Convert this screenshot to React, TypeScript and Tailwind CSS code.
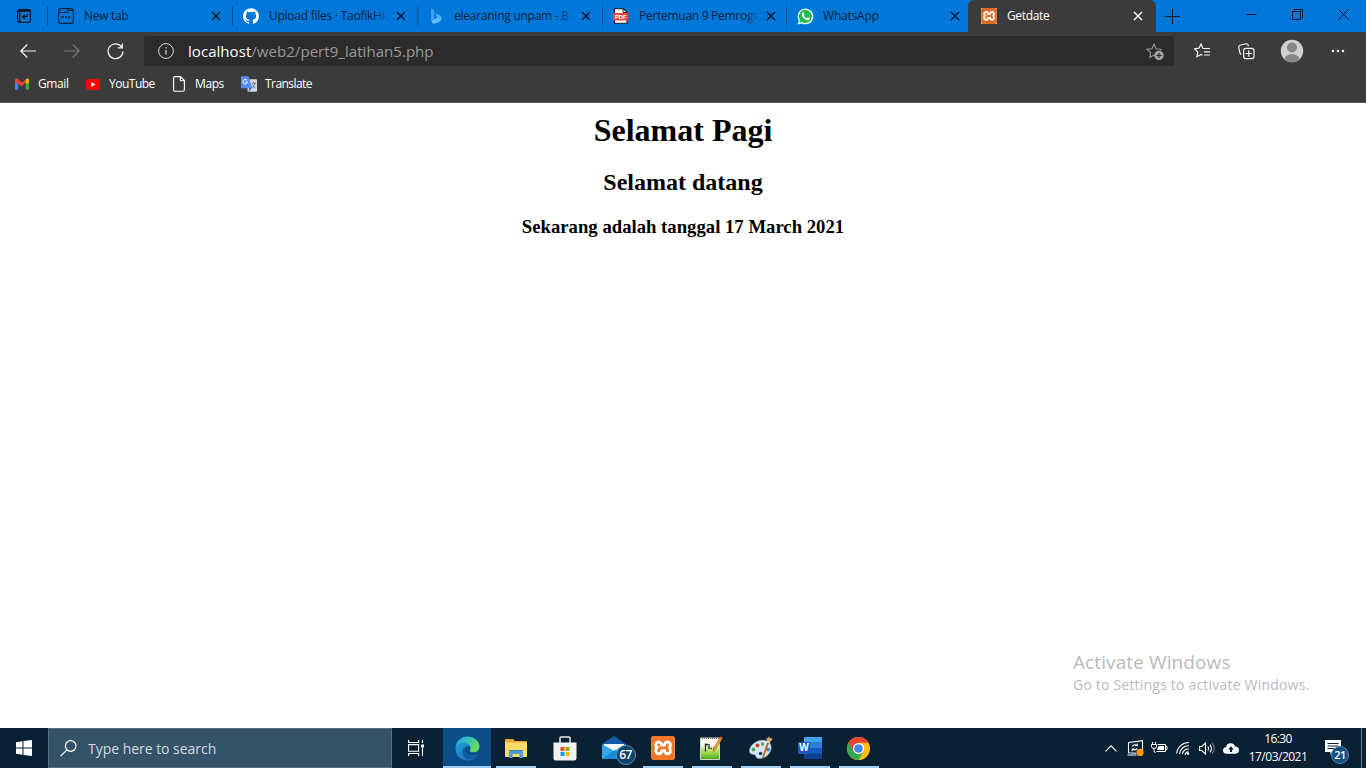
import type { ReactNode } from "react";
import { SiGithub, SiXampp } from "react-icons/si";

const line = { fill: "none", stroke: "currentColor", strokeWidth: 1 } as const;

function CloseGlyph() {
  return (
    <svg width="10" height="10" viewBox="0 0 10 10" {...line} strokeWidth={1.4}>
      <path d="M1 1l8 8M9 1L1 9" />
    </svg>
  );
}

function VerticalTabsIcon() {
  return (
    <svg width="16" height="16" viewBox="0 0 16 16" {...line} strokeWidth={1.3}>
      <rect x="1.6" y="1.6" width="12.8" height="12.8" rx="1.8" />
      <path d="M1.6 2.800h12.800" strokeWidth="2" />
      <path d="M3.800 3v11.400" />
      <path d="M11.500 6v1.300q0 1.400-1.400 1.400H6.800M8.800 6.500L6.600 8.700l2.200 2.200" />
    </svg>
  );
}

function NewTabIcon() {
  return (
    <svg width="16" height="16" viewBox="0 0 16 16" {...line} stroke="#03203f" strokeWidth={1.1}>
      <rect x="0.6" y="0.6" width="14.8" height="14.8" rx="2.4" />
      <path d="M.6 4.500h8.200q1.200 0 1.200-1.200V2M10 2.500h5.400" />
      <path d="M3.600 9.200h2M7 9.200h2M10.400 9.200h2" strokeWidth="2" />
    </svg>
  );
}

function BingIcon() {
  return (
    <svg width="13" height="16" viewBox="0 0 13 16">
      <defs>
        <linearGradient id="bing" x1="0" y1="0" x2="0" y2="1">
          <stop offset="0" stopColor="#3fa9f2" />
          <stop offset="1" stopColor="#4b9cf5" />
        </linearGradient>
      </defs>
      <path d="M1 .6l2.600 1.300q.6.400.6 1.100v8.300L1.200 13z" fill="url(#bing)" />
      <path d="M5.600 5.200l4 2q2.300 1.300 2 3.600-.2 1.600-2 2.600L5 15.400q-2.400.8-3.600-1.600L8 10.300l-1.300-.9z" fill="#48aef5" />
      <path d="M1.200 13l6.300-3.200 4.100.6q-.2 2-2.200 3.200L5 15.400q-2.600.6-3.800-2.400z" fill="#67bdfb" />
    </svg>
  );
}

function PdfIcon() {
  return (
    <svg width="16" height="16" viewBox="0 0 16 16">
      <path d="M1.500 .7h9l3.500 3.500v11.100h-12.500z" fill="#fff" stroke="#1b1b1b" strokeWidth="1.1" />
      <path d="M10 .7v3.800h4z" fill="#fff" stroke="#1b1b1b" strokeWidth=".9" />
      <rect x="0" y="5" width="15.4" height="7.4" rx=".8" fill="#f0403f" />
      <text x="7.7" y="10.8" textAnchor="middle" fontSize="5.8" fontWeight="700" fontFamily="Liberation Sans, sans-serif" fill="#fff">PDF</text>
    </svg>
  );
}

function WhatsAppIcon() {
  return (
    <svg width="17" height="17" viewBox="0 0 17 17">
      <path d="M.5 16.5l1.200-4A7.900 7.900 0 1 1 4.700 15.400z" fill="#eefcf1" />
      <path d="M2.200 14.800l.8-2.700A6.500 6.500 0 1 1 5 14z" fill="#22bd4c" />
      <path d="M5.600 4.400q.6-.5 1 .1l.8 1.700q.1.400-.7 1.200 1 2 3 2.800.9-1.100 1.200-1l1.800.9q.4.400-.3 1.500-1.200 1.100-3.300.2Q6 10.500 4.900 8q-.7-2.300.7-3.600z" fill="#fff" />
    </svg>
  );
}

function XamppIcon({ small }: { small?: boolean }) {
  return small ? (
    <span className="block h-4 w-4 bg-[#fff1e0]"><SiXampp size={16} color="#dd6d2b" /></span>
  ) : (
    <span className="block h-6 w-6 rounded-sm bg-white"><SiXampp size={24} color="#f17627" /></span>
  );
}

type TabProps = { icon: ReactNode; title: string; fade?: string; width: string; track: string };

function Tab({ icon, title, fade, width, track }: TabProps) {
  return (
    <div className={`relative flex h-8 shrink-0 items-center pl-[10px] text-[#03203f] ${width}`}>
      <span className="flex w-[26px] items-center">{icon}</span>
      <span className={`w-[118px] whitespace-nowrap text-xs ${track}`}>
        {title}
        {fade && <span className="bg-gradient-to-r from-[#03203f] to-[#0074d2] bg-clip-text text-transparent">{fade}</span>}
      </span>
      <span className="ml-[9px] text-[#04162c]"><CloseGlyph /></span>
      <span className="absolute right-0 top-[6px] h-5 w-px bg-[#064f94]" />
    </div>
  );
}

function TabStrip() {
  return (
    <div className="flex h-8 bg-[#0078d9]">
      <div className="relative flex w-12 items-center justify-center text-[#04162c]">
        <VerticalTabsIcon />
        <span className="absolute right-0 top-[6px] h-5 w-px bg-[#064f94]" />
      </div>
      <Tab width="w-[185px]" track="tracking-[-0.3px]" title="New tab" icon={<NewTabIcon />} />
      <Tab width="w-[185px]" track="tracking-[-0.25px]" title="Upload files · Taofik" fade="Hic" icon={<SiGithub size={16} color="#fff" />} />
      <Tab width="w-[185px]" track="tracking-[-0.25px]" title="elearaning unpam - " fade="Bi" icon={<span className="pl-[2px]"><BingIcon /></span>} />
      <Tab width="w-[184px]" track="tracking-[-0.28px]" title="Pertemuan 9 Pemro" fade="gr" icon={<PdfIcon />} />
      <div className="flex h-8 w-[181px] items-center pl-[10px] text-[#03203f]">
        <span className="flex w-[26px]"><WhatsAppIcon /></span>
        <span className="w-[118px] text-xs tracking-[-0.2px]">WhatsApp</span>
        <span className="ml-[9px] text-[#04162c]"><CloseGlyph /></span>
      </div>
      <div className="flex w-[188px] items-center rounded-t-md bg-[#3b3b3b] pl-[13px] text-white">
        <span className="w-[26px]"><XamppIcon small /></span>
        <span className="w-[126px] text-xs tracking-[-0.35px]">Getdate</span>
        <CloseGlyph />
      </div>
      <div className="flex flex-1 items-center pl-[9px] text-[#04162c]">
        <svg width="15" height="15" viewBox="0 0 15 15" {...line}><path d="M0 7.500h15M7.500 0v15" /></svg>
      </div>
      <div className="flex w-[138px] text-[#04162c]">
        <span className="flex w-[46px] justify-center pt-[9px]">
          <svg width="11" height="11" viewBox="0 0 11 11" {...line}><path d="M0.500 5.500h10" /></svg>
        </span>
        <span className="flex w-[46px] justify-center pt-[9px]">
          <svg width="11" height="11" viewBox="0 0 11 11" {...line}><path d="M.5 2.500h8v8h-8zM2.500 2.500v-2h8v8h-2" /></svg>
        </span>
        <span className="flex w-[46px] justify-center pt-[9px]">
          <svg width="11" height="11" viewBox="0 0 11 11" {...line}><path d="M.5.5l10 10M10.500.5l-10 10" /></svg>
        </span>
      </div>
    </div>
  );
}

function Toolbar() {
  return (
    <div className="flex h-[38px] items-center text-[#f2f2f2]">
      <div className="flex w-[144px] items-center pl-5">
        <svg width="16" height="14" viewBox="0 0 16 14" {...line} strokeWidth={1.2}><path d="M16 7H.8M7.300.5L.8 7l6.500 6.500" /></svg>
        <svg className="ml-7 text-[#777]" width="16" height="14" viewBox="0 0 16 14" {...line} strokeWidth={1.2}><path d="M0 7h15.200M8.700.5L15.200 7l-6.500 6.500" /></svg>
        <svg className="ml-[27px]" width="17" height="17" viewBox="0 0 17 17" {...line} strokeWidth={1.3}><path d="M14.900 4.500A7.400 7.400 0 1 0 15.900 8.500M15.300.6v4.300h-4.500" /></svg>
      </div>
      <div className="flex h-[30px] w-[1030px] items-center rounded-[3px] bg-[#2b2b2b] pl-[14px] pr-[10px]">
        <svg width="16" height="16" viewBox="0 0 16 16" fill="none" stroke="#d8d8d8"><circle cx="8" cy="8" r="7.400" /><path d="M8 7v4.500M8 4.200v1.400" strokeWidth="1.300" /></svg>
        <span className="ml-[14px] flex-1 whitespace-nowrap text-[15px] leading-5 tracking-[0.05px] text-[#9a9a9a]"><span className="text-white">localhost</span>/web2/pert9_latihan5.php</span>
        <svg width="18" height="17" viewBox="0 0 18 17" fill="none" stroke="#999" strokeWidth="1.100">
          <path d="M9 13l-1-1-4.200 2.400.9-4.800L1 6.300l4.900-.6L8 1.200l2.100 4.500 4.900.6-1 1" />
          <circle cx="13" cy="12.400" r="4.700" fill="#a6a6a6" stroke="none" />
          <path d="M13 9.800v5.200M10.400 12.400h5.200" stroke="#2b2b2b" strokeWidth="1.200" />
        </svg>
      </div>
      <div className="flex flex-1 items-center pl-5">
        <svg width="16" height="16" viewBox="0 0 16 16" {...line} strokeWidth={1.2}>
          <path d="M9.300 5.500L8.700 5 7 1 5 5.200l-4.500.6 3.300 3.100-.9 4.800L7 11.500l1.500.8M9 5.500h7M10 8.800h6M10 12h6" />
        </svg>
        <svg className="ml-7" width="17" height="17" viewBox="0 0 17 17" {...line} strokeWidth={1.2}>
          <path d="M3.200 11.500Q2.200 10.800 1.800 9.500L.8 4.500Q.6 2.500 2.500 2L7.800.8Q9.800.5 10.300 2.500l.2.600" />
          <rect x="5.600" y="5.400" width="10.400" height="10.200" rx="2.300" />
          <path d="M10.800 7.300v6.400M7.600 10.500h6.400" />
        </svg>
        <svg className="ml-[25px]" width="24" height="24" viewBox="0 0 24 24">
          <clipPath id="avatar"><circle cx="12" cy="12" r="11.200" /></clipPath>
          <g clipPath="url(#avatar)"><path d="M0 0h24v24H0z" fill="#d2d0ce" /><circle cx="12" cy="8.500" r="5" fill="#8a8886" /><ellipse cx="12" cy="21.500" rx="8" ry="6.500" fill="#8a8886" /></g>
        </svg>
        <svg className="ml-[27px]" width="14" height="4" viewBox="0 0 14 4" fill="currentColor"><circle cx="2" cy="2" r="1.250" /><circle cx="7" cy="2" r="1.250" /><circle cx="12" cy="2" r="1.250" /></svg>
      </div>
    </div>
  );
}

function Bookmarks() {
  return (
    <div className="flex h-[33px] items-center border-b border-[#5c5c5c] pb-[4px] pl-[15px] text-xs text-white">
      <div className="flex w-[71px] items-center">
        <svg width="14" height="12" viewBox="0 0 14 12">
          <path d="M0 3v8q0 .8.9.800H3.200V4z" fill="#4285f4" /><path d="M14 3v8q0 .8-.9.800H10.800V4z" fill="#34a853" />
          <path d="M0 2.200Q.3 0 2.200.6l4.800 3.800L11.800.6Q12.700.2 13.300 1L7 8.600 0 4z" fill="#ea4335" /><path d="M10.800 1.400Q13.700-.8 14 2.200V4l-3.200 2.500z" fill="#fbbc04" />
        </svg>
        <span className="ml-[9px] tracking-[-0.4px]">Gmail</span>
      </div>
      <div className="flex w-[87px] items-center">
        <svg width="14" height="11" viewBox="0 0 14 11"><rect width="14" height="11" rx="2.500" fill="#f00" /><path d="M5.300 3v5l4.200-2.500z" fill="#fff" /></svg>
        <span className="ml-[9px] tracking-[-0.5px]">YouTube</span>
      </div>
      <div className="flex w-[68px] items-center">
        <svg width="12" height="16" viewBox="0 0 12 16" {...line} strokeWidth={1.1}><path d="M2.200.6h5.200l4 4v9.200q0 1.500-1.600 1.500H2.200Q.6 15.300.6 13.800V2.200Q.6.600 2.200.6zM7.300.6v3.500q0 .7.700.7h3.400" /></svg>
        <span className="ml-[10px] tracking-[-0.4px]">Maps</span>
      </div>
      <div className="flex items-center">
        <svg width="16" height="16" viewBox="0 0 16 16">
          <rect x="6.500" y="3.200" width="9.500" height="12.500" rx="1" fill="#d6d8db" /><path d="M8.500 11.600l-1 4.100 3.200-3.500z" fill="#3060c0" />
          <path d="M1 .2h6.500l3.800 12H1q-1 0-1-1v-10q0-1 1-1z" fill="#5290f5" />
          <path d="M11 7.200h4M12.300 5.800v1.400M14 7.200q-.7 3.200-3 5M11.500 8.600q1 2.300 3 3.500" fill="none" stroke="#667b85" />
          <path d="M6 4.200A2.300 2.300 0 1 0 6.500 6H4.400" fill="none" stroke="#fff" />
        </svg>
        <span className="ml-2 tracking-[-0.55px]">Translate</span>
      </div>
    </div>
  );
}

function EdgeIcon() {
  return (
    <svg width="25" height="25" viewBox="0 0 25 25">
      <defs>
        <linearGradient id="edgeTop" x1="0" y1="0" x2="1" y2=".3"><stop offset="0" stopColor="#239fdd" /><stop offset=".55" stopColor="#35c3c0" /><stop offset="1" stopColor="#65df55" /></linearGradient>
        <linearGradient id="edgeLow" x1="0" y1="0" x2="1" y2="1"><stop offset="0" stopColor="#259bdc" /><stop offset="1" stopColor="#1368b8" /></linearGradient>
      </defs>
      <path d="M.5 12C1 4.500 6.500.5 12.500.5S24.500 5 24.500 10.500c0 4-3 5.800-6.200 5.800-2.600 0-4.300-1-3.300-2.400 1.500-2.200.1-5.300-3.500-5.400C6 8 2 9.500.5 12z" fill="url(#edgeTop)" />
      <path d="M.5 12.500C1.300 8.500 5 6.500 9 6.700c3.500.1 6 1.800 6.400 4.500-1.500-1.500-4.200-1.700-5.600.5-1.800 3-.5 8 4.700 9.100 3.500.8 6.300-.5 8.300-2-2.300 4-6 5.800-10.400 5.800C5.500 24.500.2 19 .5 12.500z" fill="url(#edgeLow)" />
      <path d="M9.300 11.300c-3 3-2.500 9.200 2.500 12 5 .6 9-1.400 11-4.500.3-.7-.2-1-.8-.7-6.500 2.900-11.900.2-12.700-6.800z" fill="#155ba4" />
    </svg>
  );
}

function ExplorerIcon() {
  return (
    <svg width="22" height="19" viewBox="0 0 22 19">
      <path d="M0 1q0-1 1-1h7l2 2h11q1 0 1 1v3H0z" fill="#e9a83b" /><rect y="3.500" width="22" height="14.500" rx=".7" fill="#ffda6a" />
      <path d="M4 19v-6q0-2 2-2h10q2 0 2 2v6h-3.500v-4h-7v4z" fill="#4c9cd2" /><path d="M4 11.500h14" stroke="#3a83b8" />
    </svg>
  );
}

function StoreIcon() {
  return (
    <svg width="24" height="25" viewBox="0 0 24 25">
      <path d="M7 7V2q0-1 1-1h8q1 0 1 1v5" fill="none" stroke="#e9edf0" strokeWidth="1.500" /><path d="M.5 6.500h23v15.800q0 2.200-2.200 2.200H2.700Q.5 24.500.5 22.300z" fill="#f1f1f2" />
      <path d="M7.500 11h4v4h-4z" fill="#f25022" /><path d="M12.500 11h4v4h-4z" fill="#7fba00" /><path d="M7.500 16h4v4h-4z" fill="#00a4ef" /><path d="M12.500 16h4v4h-4z" fill="#ffb900" />
    </svg>
  );
}

function MailIcon() {
  return (
    <span className="relative block h-6 w-6">
      <svg width="24" height="24" viewBox="0 0 24 24">
        <path d="M0 8L12 0l12 8v3H0z" fill="#145aab" /><path d="M2 8h20v9H2z" fill="#f5f8fa" /><path d="M0 8l12 7L24 8v14q0 1-1 1H1q-1 0-1-1z" fill="#30a9e9" /><path d="M0 23L13 14 24 22v1z" fill="#188dd8" />
      </svg>
      <span className="absolute left-[14px] top-[9px] flex h-5 w-5 items-center justify-center rounded-full border border-[#5c8fad] bg-[#09436e] text-xs font-semibold tracking-[-0.5px] text-white">67</span>
    </span>
  );
}

function NotepadIcon() {
  return (
    <svg width="23" height="24" viewBox="0 0 23 24">
      <defs><linearGradient id="note" x2="0" y2="1"><stop offset=".3" stopColor="#f8faf2" /><stop offset=".65" stopColor="#a7dc54" /><stop offset="1" stopColor="#48aa17" /></linearGradient></defs>
      <path d="M.5 2h19v21.500H.5z" fill="url(#note)" stroke="#cdd5cd" /><path d="M2 2h17" stroke="#777" strokeWidth="2" strokeDasharray="1 1" />
      <path d="M5.500 7.500v8M5.500 8.500h2.500M9 8v5M10.500 12.500h1.300M13 12.500h1.300" stroke="#222" strokeWidth="1.300" fill="none" />
      <path d="M20.200.7l2.300 1.200-7.200 12.300-2.200 1.500.2-2.800z" fill="#e9a22c" stroke="#9a641b" strokeWidth=".5" /><path d="M20.200.7l2.300 1.200-1 1.600-2.200-1.200z" fill="#d84f3d" />
    </svg>
  );
}

function PaintIcon() {
  return (
    <svg width="24" height="24" viewBox="0 0 24 24">
      <path d="M11 4.500C18 3 23 7 22 13s-7 10-12.500 9.500C6.500 22.300 7.500 19 5 18.500S.3 18 .5 14.500 4.500 6 11 4.500z" fill="#d9e9f4" stroke="#88adc5" strokeWidth=".6" />
      <circle cx="11.500" cy="17.500" r="1.700" fill="#123b5b" /><circle cx="4.500" cy="13.500" r="1.900" fill="#4aa65a" /><circle cx="8.500" cy="9.500" r="2" fill="#d83d35" /><circle cx="13.500" cy="8" r="1.700" fill="#4eaa54" /><circle cx="19" cy="13.500" r="2" fill="#3988d2" />
      <path d="M18.500 5l2 1-5.800 16-2 1 .5-2.500z" fill="#be712b" /><path d="M17 1.500l1.500 1L20 .3l1 2 2.800.2-2 3.300-3.300.2z" fill="#d9aa75" /><path d="M18 4.600l3 1.300-.7 1.400-3-1.300z" fill="#e5e5e5" />
    </svg>
  );
}

function WordIcon() {
  return (
    <svg width="24" height="22" viewBox="0 0 24 22">
      <rect x="6" width="18" height="22" rx="1.200" fill="#185abd" /><path d="M6 1q0-1 1-1h16q1 0 1 1v4.500H6z" fill="#41a5ee" /><path d="M6 5.500h18V11H6z" fill="#2b7cd3" /><path d="M6 16.500h18V21q0 1-1 1H7q-1 0-1-1z" fill="#103f91" />
      <rect y="5" width="12" height="12" rx="1" fill="#185abd" /><text x="6" y="14.400" textAnchor="middle" fontFamily="Liberation Sans, sans-serif" fontWeight="700" fontSize="10" fill="#fff">W</text>
    </svg>
  );
}

function ChromeIcon() {
  return (
    <svg width="23" height="23" viewBox="0 0 24 24">
      <circle cx="12" cy="12" r="12" fill="#fbc116" />
      <path d="M12 12L1.610 6A12 12 0 0 0 12 24l5.200-9z" fill="#34a853" />
      <path d="M12 6h10.390A12 12 0 0 0 1.610 6l5.190 9L12 12z" fill="#ea4335" />
      <circle cx="12" cy="12" r="5.800" fill="#fff" /><circle cx="12" cy="12" r="4.500" fill="#4285f4" />
    </svg>
  );
}

function TaskButton({ children, open = true }: { children: ReactNode; open?: boolean }) {
  return (
    <div className="relative flex h-10 w-[49px] items-center justify-center">
      {children}
      {open && <span className="absolute bottom-0 left-[5px] h-[2px] w-10 bg-[#9ccdf2]" />}
    </div>
  );
}

function TrayCell({ children }: { children: ReactNode }) {
  return <span className="flex w-6 items-center justify-center">{children}</span>;
}

function Taskbar() {
  return (
    <footer className="flex h-10 bg-[#0a2033] text-white">
      <div className="flex w-12 items-center justify-center">
        <svg width="16" height="16" viewBox="0 0 16 16" fill="#fff"><path d="M0 2.200L6.500 1.300V7.500H0zM7.500 1.100L16 0v7.500H7.500zM0 8.500h6.500v6.200L0 13.800zM7.500 8.500H16V16l-8.500-1.100z" /></svg>
      </div>
      <div className="flex w-[344px] items-center border border-[#577083] bg-[#345268] pl-[11px]">
        <svg width="17" height="17" viewBox="0 0 17 17" {...line} strokeWidth={1.2}><circle cx="10.700" cy="6" r="5.300" /><path d="M6.900 9.800L.6 16.200" /></svg>
        <span className="ml-[11px] pt-px text-sm tracking-[-0.03px] text-[#d2dae0]">Type here to search</span>
      </div>
      <div className="flex w-[51px] items-center pl-4">
        <svg width="16" height="16" viewBox="0 0 16 16" {...line} strokeWidth={1.1}><path d="M.6 0v2.500h10V0M.6 16v-2.500h10V16M.6 4.600h10v6.700H.6zM14.500 0v3M14.500 8v8" /><path d="M13 4.500h3v3h-3z" fill="#fff" stroke="none" /></svg>
      </div>
      <div className="relative flex w-12 items-center justify-center bg-[#0a4d87]">
        <EdgeIcon />
        <span className="absolute bottom-0 left-0 h-[2px] w-full bg-[#9ccdf2]" />
      </div>
      <TaskButton><ExplorerIcon /></TaskButton>
      <TaskButton open={false}><StoreIcon /></TaskButton>
      <TaskButton open={false}><MailIcon /></TaskButton>
      <TaskButton><XamppIcon /></TaskButton>
      <TaskButton><NotepadIcon /></TaskButton>
      <TaskButton><PaintIcon /></TaskButton>
      <TaskButton><WordIcon /></TaskButton>
      <TaskButton><ChromeIcon /></TaskButton>
      <div className="ml-auto flex">
        <TrayCell><svg width="12" height="7" viewBox="0 0 12 7" {...line} strokeWidth={1.2}><path d="M.5 6.300L6 .8l5.500 5.500" /></svg></TrayCell>
        <TrayCell>
          <svg width="17" height="16" viewBox="0 0 17 16" {...line} strokeWidth={1.1}><path d="M1.500 2.500L15.500.6V11M9 13.300L1.500 12.700V2.500M.5 15h9M5.300 6.500A3 3 0 0 1 10 5.500M10.300 3.500v2.300H8M10 8.400A3 3 0 0 1 5.500 9.200M5.200 11.300V9h2.300" /><circle cx="13" cy="12.400" r="3.600" fill="#ff9a0b" stroke="none" /></svg>
        </TrayCell>
        <TrayCell>
          <svg width="17" height="12" viewBox="0 0 17 12" {...line}><path d="M6.500 2.500h8v7h-9M14.500 4.500h1.500v3h-1.500M1.500 0v2.500M4.500 0v2.500M.5 2.500h5v2q0 2-2.500 2t-2.500-2zM3 6.500V9q0 1.500 1.500 1.500" /><path d="M7.500 4h5.500v4H6z" fill="#fff" stroke="none" /></svg>
        </TrayCell>
        <TrayCell>
          <svg width="14" height="14" viewBox="0 0 14 14" {...line} strokeWidth={1.1}><path d="M.7 12.500A12 12 0 0 1 13 1.500M3.500 13A9 9 0 0 1 13 4.800M6.300 13.300A6 6 0 0 1 13 8" /><path d="M9 13.800A4 4 0 0 1 12.500 10.700" /><circle cx="12" cy="12.500" r="1.300" fill="#fff" stroke="none" /></svg>
        </TrayCell>
        <TrayCell>
          <svg width="16" height="13" viewBox="0 0 16 13" {...line} strokeWidth={1.1}><path d="M.6 4.500h2.200L6.500 1v11L2.800 8.500H.6zM8.800 4.500q1.500 2 0 4M11 2.700q2.800 3.800 0 7.600" /><path d="M13.200 1q4 5.500 0 11" stroke="#71818f" /></svg>
        </TrayCell>
        <TrayCell>
          <svg width="16" height="11" viewBox="0 0 16 11"><path d="M3.500 10.800Q0 10.500 0 7.500 0 4.700 3 4.300 3.700.3 7.500.2q3.600 0 4.500 3.200 4 .3 4 3.700t-3.700 3.700z" fill="#fff" /><path d="M8 3.200l3 3.200H9v2.600H7V6.400H5z" fill="#0a2033" /></svg>
        </TrayCell>
        <div className="flex w-[70px] flex-col items-center pt-[2px] text-xs leading-[18px]">
          <span className="tracking-[-0.6px]">16:30</span>
          <span className="tracking-[-0.5px]">17/03/2021</span>
        </div>
        <div className="relative flex w-12 pl-3 pt-3">
          <svg width="16" height="15" viewBox="0 0 16 15"><path d="M0 0h16v12H9l-3.500 3v-3H0z" fill="#fff" /><path d="M2.500 3.500h11M2.500 6h11M2.500 8.500h7" stroke="#0a2033" /></svg>
          <span className="absolute left-[18px] top-[18px] flex h-[18px] w-[18px] items-center justify-center rounded-full border border-[#5588ae] bg-[#174e80] text-[11px] font-semibold tracking-[-0.5px]">21</span>
        </div>
        <span className="mr-1 h-10 w-px bg-[#71818f]" />
      </div>
    </footer>
  );
}

export default function App() {
  return (
    <div className="flex h-[768px] w-[1366px] flex-col overflow-hidden bg-white font-['Open_Sans','Noto_Sans',sans-serif]">
      <header className="bg-[#3b3b3b]">
        <TabStrip />
        <Toolbar />
        <Bookmarks />
      </header>
      <main className="relative flex-1 pt-[9px] text-center font-['Liberation_Serif',serif] font-bold text-black">
        <h1 className="text-[32px] leading-[37px]">Selamat Pagi</h1>
        <h2 className="mt-5 text-2xl leading-[27px]">Selamat datang</h2>
        <h3 className="mt-5 text-[18.72px] leading-[21px]">Sekarang adalah tanggal 17 March 2021</h3>
        <aside className="absolute bottom-[32px] left-[1073px] whitespace-nowrap text-left font-['Open_Sans','Noto_Sans',sans-serif] font-normal text-[#bababa]">
          <p className="text-[19px] leading-6 tracking-[0.1px]">Activate Windows</p>
          <p className="text-sm leading-[22px] tracking-[0.2px]">Go to Settings to activate Windows.</p>
        </aside>
      </main>
      <Taskbar />
    </div>
  );
}
